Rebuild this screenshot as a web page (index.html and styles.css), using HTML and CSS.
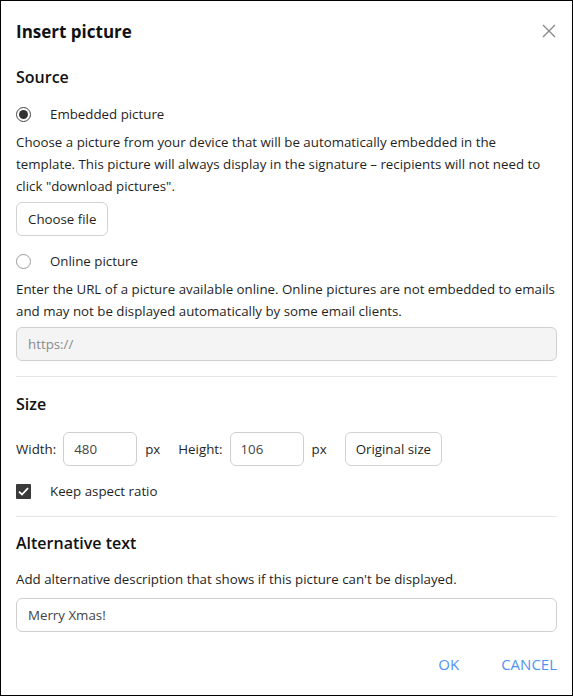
FILE: index.html
```html
<!DOCTYPE html>
<html lang="en">
<head>
  <meta charset="UTF-8" />
  <meta name="viewport" content="width=device-width, initial-scale=1" />
  <title>Insert picture</title>
  <link rel="stylesheet" href="styles.css">
</head>
<body>
  <div class="dialog">
    <div class="dialog-header">
      <h1>Insert picture</h1>
      <button class="close-button" aria-label="Close">
        <svg width="14" height="14" viewBox="0 0 14 14">
          <path d="M1 1 L13 13 M13 1 L1 13" stroke="#8a8a8a" stroke-width="1.4" fill="none" />
        </svg>
      </button>
    </div>

    <!-- Source -->
    <h2>Source</h2>
    <label class="option">
      <span class="radio checked"></span>
      Embedded picture
    </label>
    <p class="hint">Choose a picture from your device that will be automatically embedded in the template. This picture will always display in the signature – recipients will not need to click "download pictures".</p>
    <button class="button">Choose file</button>

    <label class="option">
      <span class="radio"></span>
      Online picture
    </label>
    <p class="hint">Enter the URL of a picture available online. Online pictures are not embedded to emails and may not be displayed automatically by some email clients.</p>
    <input class="field field-disabled" type="text" placeholder="https://" disabled>

    <hr class="divider">

    <!-- Size -->
    <h2 class="size-title">Size</h2>
    <div class="size-row">
      <span>Width:</span>
      <input class="field field-small" type="text" value="480">
      <span class="unit">px</span>
      <span>Height:</span>
      <input class="field field-small" type="text" value="106">
      <span class="unit">px</span>
      <button class="button">Original size</button>
    </div>
    <label class="option">
      <span class="checkbox">
        <svg width="11" height="9" viewBox="0 0 11 9">
          <path d="M1 4.6 L4 7.5 L10 1.2" stroke="#fff" stroke-width="1.8" fill="none" />
        </svg>
      </span>
      Keep aspect ratio
    </label>

    <hr class="divider divider-tight">

    <!-- Alternative text -->
    <h2>Alternative text</h2>
    <p class="hint hint-alt">Add alternative description that shows if this picture can't be displayed.</p>
    <input class="field" type="text" value="Merry Xmas!">

    <div class="dialog-footer">
      <button class="link-button">OK</button>
      <button class="link-button">CANCEL</button>
    </div>
  </div>
</body>
</html>
```

FILE: styles.css
```css
* {
  box-sizing: border-box;
}
body {
  margin: 0;
  font-family: 'Open Sans', sans-serif;
  font-size: 13.3px;
  color: #1f1f1f;
  background: white;
}
.dialog {
  width: 573px;
  height: 696px;
  border: 1px solid #000;
  padding: 0 15px;
  background: white;
}
.dialog-header {
  height: 60px;
  display: flex;
  align-items: center;
  justify-content: space-between;
}
h1 {
  margin: 0;
  font-size: 17px;
  font-weight: 700;
  color: #111;
}
.close-button {
  border: none;
  background: none;
  padding: 0;
  margin-right: 1px;
  display: flex;
}
h2 {
  margin: 4px 0 0;
  font-size: 16px;
  font-weight: 600;
  line-height: 24px;
  color: #111;
}
.option {
  display: flex;
  align-items: center;
  height: 22px;
  margin-top: 14px;
}
.radio {
  width: 15px;
  height: 15px;
  border: 1px solid #9a9a9a;
  border-radius: 50%;
  margin-right: 19px;
  display: flex;
  align-items: center;
  justify-content: center;
}
.radio.checked {
  border-color: #444;
}
.radio.checked::after {
  content: "";
  width: 9px;
  height: 9px;
  border-radius: 50%;
  background: #333;
}
.checkbox {
  width: 15px;
  height: 15px;
  background: #3a3a3a;
  border-radius: 1px;
  margin-right: 19px;
  display: flex;
  align-items: center;
  justify-content: center;
}
.hint {
  margin: 6px 0 0;
  line-height: 22px;
}
.button {
  display: block;
  font-family: inherit;
  font-size: 13.3px;
  color: #1f1f1f;
  background: white;
  border: 1px solid #d2d2d2;
  border-radius: 6px;
  height: 34px;
  padding: 0 11px;
  margin-top: 5px;
}
.field {
  display: block;
  width: 100%;
  height: 34px;
  margin-top: 5px;
  padding: 0 11px;
  font-family: inherit;
  font-size: 13.3px;
  color: #444;
  border: 1px solid #cfcfcf;
  border-radius: 6px;
  background: white;
}
.field-disabled {
  background: #f4f4f4;
}
.field-disabled::placeholder {
  color: #8a8a8a;
}
.divider {
  border: none;
  border-top: 1px solid #e6e6e6;
  margin: 15px 0 0;
}
.divider-tight {
  margin-top: 14px;
}
.divider + h2 {
  margin-top: 14px;
}
.divider + .size-title {
  margin-top: 15px;
}
.size-row {
  display: flex;
  align-items: center;
  margin-top: 16px;
}
.size-row .field-small {
  width: 74px;
  margin: 0 8px 0 7px;
  padding: 0 10px;
}
.size-row .unit {
  margin-right: 18px;
}
.size-row .button {
  margin: 0;
  padding: 0 10px;
}
.hint-alt {
  margin-top: 13px;
}
.hint-alt + .field {
  margin-top: 8px;
}
.dialog-footer {
  display: flex;
  justify-content: flex-end;
  gap: 42px;
  margin-top: 22px;
}
.link-button {
  border: none;
  background: none;
  padding: 0;
  font-family: inherit;
  font-size: 15px;
  color: #4f93f5;
}
```
